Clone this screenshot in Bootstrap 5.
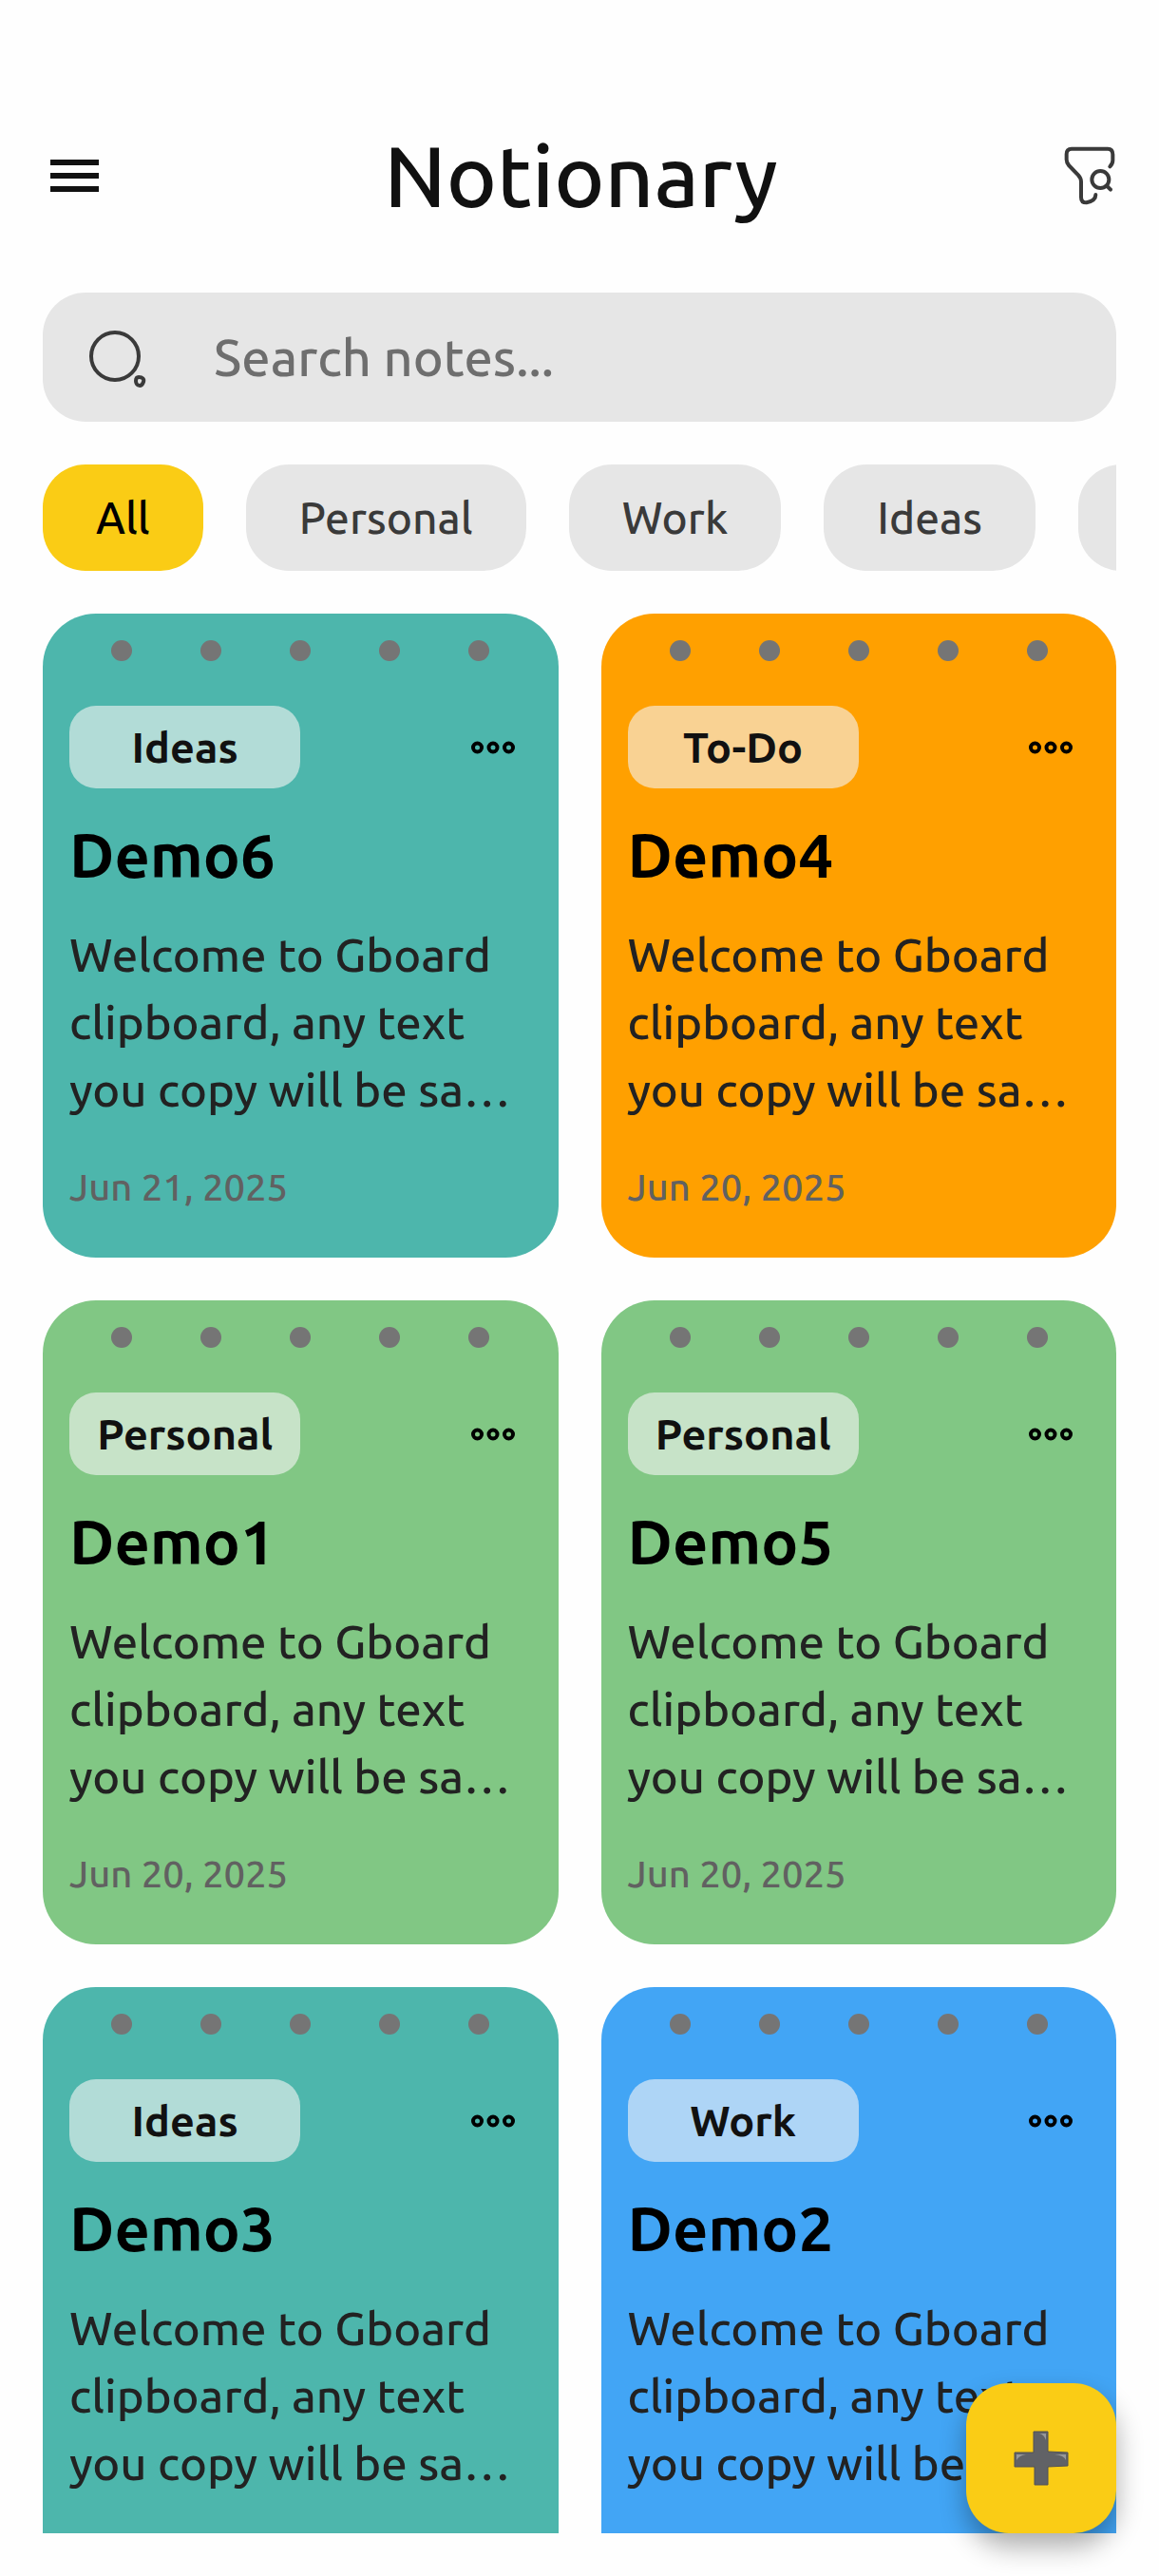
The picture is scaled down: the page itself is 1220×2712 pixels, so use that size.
<!DOCTYPE html>
<html lang="en">
<head>
<meta charset="utf-8">
<meta name="viewport" content="width=device-width, initial-scale=1">
<title>Notionary</title>
<link href="https://cdn.jsdelivr.net/npm/bootstrap@5.3.0/dist/css/bootstrap.min.css" rel="stylesheet">
<style>
  body {
    --edge: 45px;
    --accent: #facc15;
    --soft: #e6e6e6;
    font-family: Ubuntu, "Noto Sans", sans-serif;
    font-weight: 500;
    background: #fefefe;
    color: #111;
  }
  .app-shell { padding: 125px var(--edge) var(--edge); gap: var(--edge); }
  .app-header { height: 120px; margin-bottom: 18px; }
  .app-header h1 { font-size: 90px; font-weight: 500; line-height: 116px; }
  .icon-btn { border: 0; background: none; padding: 0; line-height: 0; color: #000; }
  .search-bar { height: 136px; border-radius: 45px; background: var(--soft); padding: 0 46px; gap: 68px; }
  .search-bar input { border: 0; outline: 0; background: none; font-size: 54px; font-weight: 500; color: #111; min-width: 0; }
  .search-bar input::placeholder { color: #6e6e6e; opacity: 1; }
  .chips { gap: 45px; }
  .chip { border: 0; border-radius: 45px; background: var(--soft); color: #3a3a3a; font-size: 46px; font-weight: 500; line-height: 112px; padding: 0 56px; }
  .chip.active { background: var(--accent); color: #000; }
  .notes { --bs-gutter-x: 45px; --bs-gutter-y: 45px; }
  .note { border-radius: 56px; padding: 28px 28px 46px; }
  .note-teal { background: #4db6ac; }
  .note-orange { background: #ffa000; }
  .note-green { background: #81c784; }
  .note-blue { background: #42a5f5; }
  .holes { margin: 0 -28px 47px; }
  .holes i { width: 22px; height: 22px; border-radius: 50%; background: #757575; }
  .tag { border-radius: 28px; font-size: 45px; font-weight: 600; line-height: 87px; }
  .note-orange .tag { background: #f9d293; }
  .note-green .tag { background: #c7e3c8; }
  .note-teal .tag { background: #b2dcd7; }
  .note-blue .tag { background: #aed5f6; }
  .more { margin-right: 18px; }
  .note h2 { font-size: 65px; font-weight: 600; line-height: 80px; color: #000; margin: 30px 0 29px; }
  .note p { font-size: 49px; line-height: 71px; color: #222; margin: 0 0 40px; }
  .note time { font-size: 40px; line-height: 56px; color: #616161; }
  .fab { right: var(--edge); bottom: var(--edge); width: 158px; height: 158px; border: 0; border-radius: 45px; background: var(--accent); box-shadow: 0 14px 28px rgba(0, 0, 0, .32); }
</style>
</head>
<body>
<div class="app-shell vh-100 d-flex flex-column overflow-hidden">
  <header class="app-header d-flex align-items-center justify-content-between flex-shrink-0">
    <button class="icon-btn ms-2" type="button" aria-label="Menu">
      <svg width="51" height="34" viewBox="0 0 51 34" fill="#111"><path d="M0 0h51v6H0zM0 14h51v6H0zM0 28h51v6H0z"/></svg>
    </button>
    <h1 class="m-0">Notionary</h1>
    <button class="icon-btn" type="button" aria-label="Filter">
      <svg width="56" height="64" viewBox="117 43 168 192" fill="none" stroke="#3a3a3a" stroke-width="12" stroke-linecap="round" stroke-linejoin="round"><path d="M265 110Q274 101 274 90V72Q274 54 258 54H144Q128 54 128 71V88Q128 97 135 106L165 137Q174 147 174 158V207Q174 224 191 224Q220 218 220 199"/><circle cx="235" cy="151" r="27"/><path d="M255 171l12 12"/></svg>
    </button>
  </header>

  <form class="search-bar d-flex align-items-center flex-shrink-0" role="search">
    <svg class="flex-shrink-0" width="64" height="64" viewBox="0 0 64 64" fill="none" stroke="#3a3a3a" stroke-width="4"><circle cx="30" cy="31" r="25"/><path d="M55 53C59 53 61 55 60 58C59 61 57 62 56 62C53 62 52 59 52 57Q52 53 55 53Z"/></svg>
    <input class="flex-grow-1" type="search" placeholder="Search notes..." aria-label="Search notes">
  </form>

  <nav class="chips d-flex overflow-hidden flex-shrink-0" aria-label="Categories">
    <button class="chip active flex-shrink-0" type="button">All</button>
    <button class="chip flex-shrink-0" type="button">Personal</button>
    <button class="chip flex-shrink-0" type="button">Work</button>
    <button class="chip flex-shrink-0" type="button">Ideas</button>
    <button class="chip flex-shrink-0" type="button" aria-label="More categories">&nbsp;</button>
  </nav>

  <main class="overflow-hidden">
    <div class="row row-cols-2 notes mt-0" id="notes"></div>
  </main>
</div>

<button class="fab position-fixed d-flex align-items-center justify-content-center p-0" type="button" aria-label="Add note">
  <svg width="58" height="58" viewBox="0 0 58 58"><path d="M21 1H36V22L57 23V37L36 38V57H22V38L1 38V23H21Z" fill="#616266" stroke="#505156" stroke-linejoin="round"/><path d="M27 3H34V10Q32 4 27 3ZM3 31V25H13Q6 26 3 31ZM43 25H55V31Q53 26 43 25Z" fill="#97989b"/></svg>
</button>

<script>
  const notes = [
    ["Ideas", "Demo6", "Jun 21, 2025", "teal"],
    ["To-Do", "Demo4", "Jun 20, 2025", "orange"],
    ["Personal", "Demo1", "Jun 20, 2025", "green"],
    ["Personal", "Demo5", "Jun 20, 2025", "green"],
    ["Ideas", "Demo3", "", "teal"],
    ["Work", "Demo2", "", "blue"]
  ];
  document.getElementById("notes").innerHTML = notes.map(([tag, title, date, tone], i) => `
    <div class="col${i < 2 ? " mt-0" : ""}">
      <article class="note note-${tone}">
        <div class="holes d-flex justify-content-evenly"><i></i><i></i><i></i><i></i><i></i></div>
        <div class="d-flex align-items-center justify-content-between">
          <div class="tag w-50 text-center">${tag}</div>
          <button class="icon-btn more" type="button" aria-label="Options for ${title}">
            <svg width="46" height="14" viewBox="0 0 46 14" fill="none" stroke="#000" stroke-width="4"><circle cx="6.5" cy="7" r="4.5"/><circle cx="23" cy="7" r="4.5"/><circle cx="39.5" cy="7" r="4.5"/></svg>
          </button>
        </div>
        <h2>${title}</h2>
        <p>Welcome to Gboard<br>clipboard, any text<br>you copy will be sa…</p>
        <time class="d-block">${date || "&nbsp;"}</time>
      </article>
    </div>`).join("");
</script>
<script src="https://cdn.jsdelivr.net/npm/bootstrap@5.3.0/dist/js/bootstrap.bundle.min.js"></script>
</body>
</html>
